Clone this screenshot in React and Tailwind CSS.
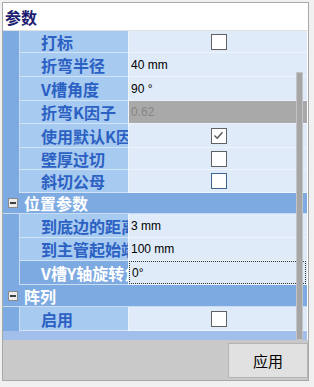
import React from "react";

const CJK = "font-['Noto_Sans_CJK_SC','Noto_Sans',sans-serif]";

function CheckBox({ checked, hover }) {
  return (
    <div
      className={
        "w-[16px] h-[16px] bg-white flex items-center justify-center border-[1.5px] " +
        (hover ? "border-[#41648e]" : "border-[#616161]")
      }
    >
      {checked && (
        <svg width="13" height="13" viewBox="0 0 13 13">
          <path d="M2.5 6.5 L5.2 9.2 L10.5 3.2" fill="none" stroke="#555" strokeWidth="1.4" />
        </svg>
      )}
    </div>
  );
}

function MinusBox() {
  return (
    <div className="w-[10px] h-[10px] border border-[#8a8a8a] bg-[#ececec] flex items-center justify-center">
      <div className="w-[6px] h-[2px] bg-[#404040]" />
    </div>
  );
}

const rows = [
  { label: "打标", cb: true, h: "h-[22px]" },
  { label: "折弯半径", value: "40 mm", h: "h-[24px]" },
  { label: "V槽角度", value: "90 °", h: "h-[24px]" },
  { label: "折弯K因子", value: "0.62", disabled: true, h: "h-[23px]" },
  { label: "使用默认K因子", cb: true, checked: true, h: "h-[24px]" },
  { label: "壁厚过切", cb: true, h: "h-[22px]" },
  { label: "斜切公母", cb: true, hover: true, h: "h-[23px]" },
  { cat: "位置参数", h: "h-[21px]" },
  { label: "到底边的距离", value: "3 mm", h: "h-[24px]" },
  { label: "到主管起始端距离", value: "100 mm", h: "h-[23px]" },
  { label: "V槽Y轴旋转角度", value: "0°", selected: true, h: "h-[24px]" },
  { cat: "阵列", h: "h-[22px]" },
  { label: "启用", cb: true, h: "h-[24px]" },
];

function Row({ r }) {
  if (r.cat) {
    return (
      <div className={"flex items-center bg-[#7eaae2] border-b border-[#c9dcf4] " + r.h}>
        <div className="w-[16px] flex justify-center pl-[3px]">
          <MinusBox />
        </div>
        <div className={"pl-[5px] text-white font-bold text-[16px] leading-none " + CJK}>{r.cat}</div>
      </div>
    );
  }
  return (
    <div className={"flex " + r.h}>
      <div className="w-[16px] bg-[#7eaae2]" />
      <div
        className={
          "w-[109px] border-l border-[#c9dcf4] border-b overflow-hidden whitespace-nowrap flex items-center pl-[21px] text-[16px] font-bold leading-none " +
          CJK +
          (r.selected
            ? " bg-[#7eaae2] text-white border-b-[#c9dcf4]"
            : " bg-[#a7caf0] text-[#2b61c3] border-b-[#d3e4f7]")
        }
      >
        {r.label}
      </div>
      <div
        className={
          "flex-1 border-l border-l-[#eef4fb] border-b border-b-[#eef4fb] flex items-center " +
          (r.disabled ? "bg-[#a9a9a9]" : "bg-[#dfebf8]")
        }
      >
        {r.cb ? (
          <div className="flex-1 flex justify-center pl-[1px]">
            <CheckBox checked={r.checked} hover={r.hover} />
          </div>
        ) : r.selected ? (
          <div className="flex-1 h-full border border-dotted border-[#333] flex items-center pl-[2px] mr-[1px] font-['Liberation_Sans',Arial,sans-serif] text-[12px] text-black">
            {r.value}
          </div>
        ) : (
          <div
            className={
              "pl-[2px] font-['Liberation_Sans',Arial,sans-serif] text-[12px] " +
              (r.disabled ? "text-[#858585]" : "text-black")
            }
          >
            {r.value}
          </div>
        )}
      </div>
    </div>
  );
}

export default function App() {
  return (
    <div className="w-[314px] h-[387px] bg-[#f0f0f0] pt-[2px] pl-[2px]">
      <div className="relative w-[307px] h-[379px] border border-[#a8a8a8] bg-white flex flex-col">
        <div className="h-[28px] shrink-0 bg-white flex items-center pl-[2px] border-b border-[#e2e2e2]">
          <span className={"text-[16px] font-bold text-[#1c1c70] leading-none " + CJK}>参数</span>
        </div>
        <div className="w-[304px] flex flex-col">
          {rows.map((r, i) => (
            <Row key={i} r={r} />
          ))}
          <div className="h-[9px] bg-[#a1bfea]" />
        </div>
        <div className="flex-1 bg-[#c9c9c9] flex justify-end items-start pt-[3px]">
          <button className="w-[80px] h-[35px] bg-[#e1e1e1] border border-[#b4b4b4] flex items-center justify-center">
            <span className={"text-[15px] text-black leading-none " + CJK}>应用</span>
          </button>
        </div>
        <div className="absolute left-[293px] top-[69px] w-[7px] h-[268px] bg-[#a6a6a6] border border-[#c4c4c4] rounded-[1px]" />
      </div>
    </div>
  );
}
